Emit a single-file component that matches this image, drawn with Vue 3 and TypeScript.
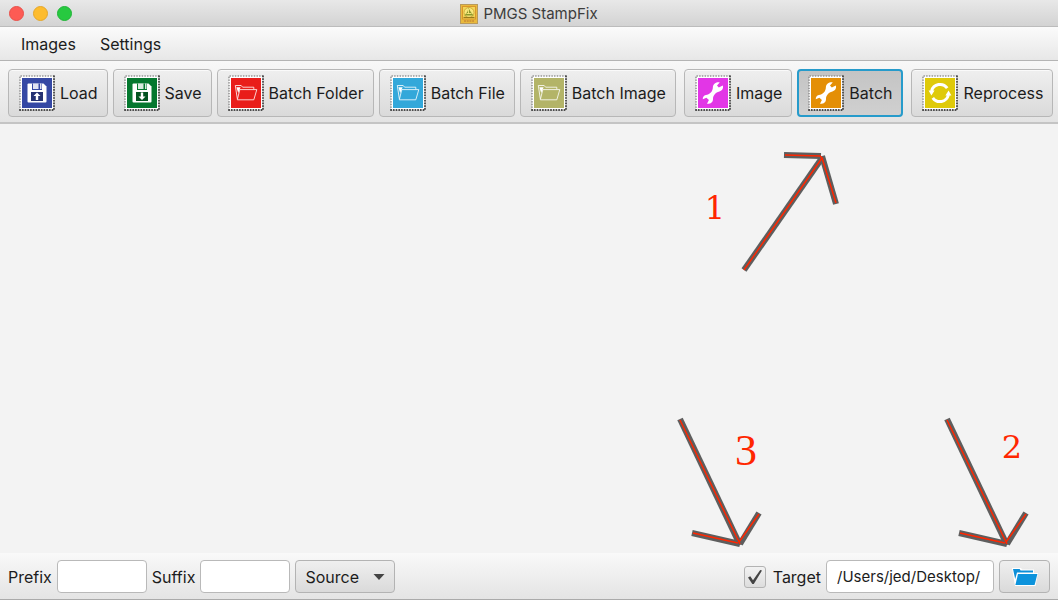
<script setup lang="ts">
import { ref } from 'vue'

type Glyph = 'up' | 'down' | 'folder' | 'wrench' | 'cycle'

interface Tool {
  label: string
  color: string
  glyph: Glyph
}

const groups: Tool[][] = [
  [
    { label: 'Load', color: '#3548a4', glyph: 'up' },
    { label: 'Save', color: '#05782f', glyph: 'down' },
    { label: 'Batch Folder', color: '#e91d1a', glyph: 'folder' },
    { label: 'Batch File', color: '#33a8da', glyph: 'folder' },
    { label: 'Batch Image', color: '#b3b468', glyph: 'folder' },
  ],
  [
    { label: 'Image', color: '#e236e6', glyph: 'wrench' },
    { label: 'Batch', color: '#e48f05', glyph: 'wrench' },
  ],
  [{ label: 'Reprocess', color: '#dfca0a', glyph: 'cycle' }],
]

const active = ref('Batch')
const prefix = ref('')
const suffix = ref('')
const source = ref('Source')
const useTarget = ref(true)
const target = ref('/Users/jed/Desktop/')
</script>

<template>
  <div class="window">
    <header class="titlebar">
      <div class="lights">
        <button class="light close" aria-label="Close"></button>
        <button class="light minimize" aria-label="Minimize"></button>
        <button class="light zoom" aria-label="Zoom"></button>
      </div>
      <h1 class="title">
        <svg width="18" height="20" viewBox="0 0 18 20" aria-hidden="true">
          <rect x="0.5" y="0.5" width="17" height="19" fill="#e9b93c" stroke="#b99a5c" />
          <rect x="2.5" y="2.5" width="13" height="12.5" fill="#f3d75a" stroke="#d9962b" />
          <circle cx="9" cy="8.5" r="5" fill="#f8e77c" stroke="#c8a12f" stroke-width="0.8" />
          <path d="M4.5 11.5L7.5 7.5L8.5 4L10.5 7.5L13.5 11.5Z" fill="#8b982b" />
          <path d="M8.5 5V10M6.5 9.5H11.5" stroke="#f8e77c" stroke-width="0.9" />
          <path d="M3.5 13.5H14.5" stroke="#9a7a1c" stroke-width="1.2" />
          <path d="M4 17H14" stroke="#c98a35" stroke-width="1.6" stroke-dasharray="2 0.7" />
        </svg>
        <span>PMGS StampFix</span>
      </h1>
    </header>

    <nav class="menubar">
      <button class="menu">Images</button>
      <button class="menu">Settings</button>
    </nav>

    <div class="toolbar" role="toolbar">
      <div v-for="(group, g) in groups" :key="g" class="group">
        <button
          v-for="tool in group"
          :key="tool.label"
          class="tool"
          :class="{ active: active === tool.label }"
          @click="active = tool.label"
        >
          <svg class="stamp" width="36" height="36" viewBox="0 0 36 36" aria-hidden="true">
            <rect x="1" y="1" width="34" height="34" fill="#fff" />
            <path d="M1 35V1H35" fill="none" stroke="#8c8c8c" stroke-width="1.6" stroke-linecap="round" stroke-dasharray="0.2 2.5" />
            <path d="M1 35H35V1" fill="none" stroke="#444" stroke-width="1.9" stroke-linecap="round" stroke-dasharray="0.2 2.5" />
            <rect x="3" y="3" width="30" height="30" :fill="tool.color" />
            <g v-if="tool.glyph === 'up' || tool.glyph === 'down'">
              <path d="M9.5 8.5H24.5L27.5 11.5V26.5A1 1 0 0 1 26.5 27.5H9.5A1 1 0 0 1 8.5 26.5V9.5A1 1 0 0 1 9.5 8.5Z" fill="#fff" />
              <path d="M13 8.5H23V15H13Z" :fill="tool.color" />
              <path d="M14 8.5H19.5V14H14ZM21 8.5H22.5V14H21Z" fill="#fff" opacity="0.85" />
              <rect x="12" y="17" width="12" height="9" :fill="tool.color" />
              <rect x="12" y="17" width="12" height="9" fill="#000" opacity="0.3" />
              <path v-if="tool.glyph === 'up'" d="M18 17.5L21.5 21H19.2V25H16.8V21H14.5Z" fill="#fff" />
              <path v-else d="M18 25L21.5 21.5H19.2V17.5H16.8V21.5H14.5Z" fill="#fff" />
            </g>
            <g v-else-if="tool.glyph === 'folder'" fill="none" stroke="#fff" stroke-width="0.8" stroke-linejoin="round">
              <path d="M9.3 23.8L7.3 10.5H13.2L14.6 12.2H25.8V14.2" />
              <path d="M9.3 24.8L11.8 14.6H28.8L25.8 24.8Z" />
              <path d="M8.4 12.2H12.6L10.2 18Z" fill="#fff" stroke="none" />
            </g>
            <path
              v-else-if="tool.glyph === 'wrench'"
              d="M27.8 10.6L23.8 12.4L22 10.4L24.7 7.4C21.4 6.9 18.2 8.7 17.9 12C17.8 14.4 17.2 16 15.8 17.6C14.2 19.3 12.8 19.7 10.9 20C8.8 20.4 7.6 22 7.8 24.2L11.4 22.7L13.9 25L12 28.8C15.4 29.1 18.1 27.2 18 23.9C18 22 18.5 20.8 19.6 19.5C21.1 17.8 22.3 16.9 24.4 16.5C27.2 15.9 28.7 13.2 27.8 10.6Z"
              fill="#fff"
            />
            <g v-else>
              <path d="M9.6 16A8.7 8.7 0 0 1 25.2 13.2" fill="none" stroke="#fff" stroke-width="3" />
              <path d="M26.4 20A8.7 8.7 0 0 1 10.8 22.8" fill="none" stroke="#fff" stroke-width="3" />
              <path d="M6.6 15.6H12.6L9.4 20.4ZM29.4 20.4H23.4L26.6 15.6Z" fill="#fff" />
            </g>
          </svg>
          <span>{{ tool.label }}</span>
        </button>
      </div>
    </div>

    <main class="canvas">
      <div class="note first">
        <svg class="arrow" width="100" height="124" viewBox="0 0 100 124" aria-hidden="true">
          <g class="outline"><path d="M4 120L82 8" /><path d="M44 5L81 6" /><path d="M82 6L96 54" /></g>
          <g class="core"><path d="M4 120L82 8" /><path d="M45 5L80 6L83 9" /><path d="M82 8L96 53" /></g>
        </svg>
        <span class="step">1</span>
      </div>
      <div class="note third">
        <svg class="arrow" width="88" height="134" viewBox="0 0 88 134" aria-hidden="true">
          <g class="outline"><path d="M5 4L65 130" /><path d="M17 118L65 129" /><path d="M65 129L84 98" /></g>
          <g class="core"><path d="M5 5L65 129" /><path d="M18 118L63 128" /><path d="M64 127L84 99" /></g>
        </svg>
        <span class="step tall">3</span>
      </div>
      <div class="note second">
        <svg class="arrow" width="88" height="134" viewBox="0 0 88 134" aria-hidden="true">
          <g class="outline"><path d="M5 4L65 130" /><path d="M17 118L65 129" /><path d="M65 129L84 98" /></g>
          <g class="core"><path d="M5 5L65 129" /><path d="M18 118L63 128" /><path d="M64 127L84 99" /></g>
        </svg>
        <span class="step">2</span>
      </div>
    </main>

    <footer class="statusbar">
      <label for="prefix">Prefix</label>
      <input id="prefix" v-model="prefix" class="field short" type="text" />
      <label for="suffix">Suffix</label>
      <input id="suffix" v-model="suffix" class="field short" type="text" />
      <div class="dropdown">
        <select v-model="source" aria-label="Name source">
          <option>Source</option>
        </select>
        <svg class="caret" width="12" height="6" viewBox="0 0 12 6" aria-hidden="true">
          <path d="M0.5 0H11.5L6 6Z" fill="#444" />
        </svg>
      </div>
      <div class="spacer"></div>
      <label class="check">
        <input v-model="useTarget" type="checkbox" />
        <svg v-if="useTarget" class="tick" width="16" height="16" viewBox="0 0 16 16" aria-hidden="true">
          <path d="M1 8.5L3.3 7.2L6 11.2L13.2 1L15 1.6L6.8 15H5.3Z" fill="#444" />
        </svg>
        <span>Target</span>
      </label>
      <input v-model="target" class="field path" type="text" aria-label="Target folder" />
      <button class="browse" aria-label="Browse">
        <svg width="28" height="20" viewBox="0 0 28 20" aria-hidden="true">
          <path d="M1 1H10L11 2.5H23V6H27L24.5 19H4Z" fill="#fff" />
          <path d="M2 2H8.6L9.6 3.5H22V5.6H6L4.2 12Z" fill="#0c8fd8" />
          <path d="M7 7H26.4L23.6 18H4.4Z" fill="#0c93dc" />
        </svg>
      </button>
    </footer>
  </div>
</template>

<style>
body {
  margin: 0;
}
</style>

<style scoped>
.window {
  display: flex;
  flex-direction: column;
  min-height: 100vh;
  box-sizing: border-box;
  border-bottom: 1px solid #aaa;
  background: #f3f3f3;
  color: #1c1c1c;
  font-family: Inter, "Liberation Sans", sans-serif;
  font-size: 16px;
  line-height: 20px;
}

button,
input,
select {
  box-sizing: border-box;
  margin: 0;
  font: inherit;
  color: inherit;
}

.titlebar {
  display: grid;
  grid-template-columns: 1fr auto 1fr;
  align-items: center;
  height: 27px;
  box-sizing: border-box;
  padding: 1px 9px 0;
  border-bottom: 1px solid #bcbcbc;
  background: linear-gradient(#e8e8e8, #d3d3d3);
}

.lights {
  display: flex;
  gap: 9px;
}

.light {
  width: 15px;
  height: 15px;
  padding: 0;
  border: 1px solid;
  border-radius: 50%;
}

.close {
  background: #fd5b54;
  border-color: #e9504a;
}

.minimize {
  background: #fdbc2e;
  border-color: #e5a72a;
}

.zoom {
  background: #27c940;
  border-color: #20b537;
}

.title {
  display: flex;
  align-items: center;
  gap: 5px;
  margin: 0;
  font-size: 15px;
  font-weight: 400;
  color: #3c3c3c;
}

.menubar {
  display: flex;
  height: 34px;
  box-sizing: border-box;
  padding: 0 9px;
  border-bottom: 1px solid #b4b4b4;
  background: linear-gradient(#fbfbfb, #e7e7e7);
}

.menu {
  padding: 0 12px;
  border: 0;
  background: none;
}

.toolbar {
  display: flex;
  gap: 8px;
  padding: 8px 8px 5px;
  border-bottom: 2px solid #c4c4c4;
  background: linear-gradient(#f8f8f8, #e3e3e3);
}

.group {
  display: flex;
  gap: 5px;
}

.tool {
  display: flex;
  align-items: center;
  gap: 5px;
  height: 48px;
  padding: 0 9px 0 10px;
  border: 1px solid #b7b7b7;
  border-radius: 4px;
  background: linear-gradient(#efefef, #dadada);
  box-shadow: inset 0 1px #fafafa;
  white-space: nowrap;
}

.tool.active {
  border: 2px solid #269bcb;
  padding: 0 9px;
  background: linear-gradient(#c4c4c4, #d0d0d0);
  box-shadow: none;
}

.stamp {
  flex: none;
}

.canvas {
  position: relative;
  flex: 1;
}

/* Numbered callouts lie freely over the empty canvas. */
.note {
  position: absolute;
  display: flex;
}

.first {
  top: 26px;
  right: 218px;
  flex-direction: row-reverse;
  gap: 15px;
}

.second {
  bottom: 4px;
  right: 36px;
}

.third {
  bottom: 4px;
  right: 301px;
}

.second .arrow,
.third .arrow {
  margin-right: -28px;
}

.outline {
  fill: none;
  stroke: #5e5e5e;
  stroke-width: 6;
}

.core {
  fill: none;
  stroke: #ff2600;
  stroke-width: 1.5;
}

.step {
  font-family: "DejaVu Serif", serif;
  font-size: 32px;
  line-height: 40px;
  color: #ff2600;
}

.first .step {
  margin-top: 38px;
}

.second .step,
.third .step {
  margin-top: 12px;
}

.third .step {
  margin-top: 16px;
}

.step.tall {
  font-family: "Liberation Serif", serif;
  font-size: 44px;
}

.statusbar {
  display: flex;
  align-items: center;
  gap: 5px;
  padding: 7px 8px 6px;
  background: linear-gradient(#f9f9f9, #e4e4e4);
}

.field {
  height: 33px;
  padding: 0 10px;
  border: 1px solid #b9b9b9;
  border-radius: 4px;
  background: #fff;
  font-size: 15px;
}

.short {
  width: 90px;
}

.path {
  width: 168px;
}

.dropdown {
  display: grid;
  align-items: center;
}

.dropdown select {
  grid-area: 1 / 1;
  appearance: none;
  width: 100px;
  height: 33px;
  padding: 0 9px;
  border: 1px solid #b3b3b3;
  border-radius: 4px;
  background: linear-gradient(#efefef, #dadada);
}

.caret {
  grid-area: 1 / 1;
  justify-self: end;
  margin-right: 10px;
  pointer-events: none;
}

.spacer {
  flex: 1;
}

.check {
  display: grid;
  grid-template-columns: 22px auto;
  align-items: center;
  column-gap: 7px;
}

.check input {
  grid-area: 1 / 1;
  appearance: none;
  width: 22px;
  height: 22px;
  border: 1px solid #b3b3b3;
  border-radius: 3px;
  background: linear-gradient(#f2f2f2, #dddddd);
}

.tick {
  grid-area: 1 / 1;
  justify-self: center;
  pointer-events: none;
}

.browse {
  display: flex;
  align-items: center;
  justify-content: center;
  width: 51px;
  height: 33px;
  padding: 0;
  border: 1px solid #b3b3b3;
  border-radius: 4px;
  background: linear-gradient(#efefef, #dadada);
}
</style>
